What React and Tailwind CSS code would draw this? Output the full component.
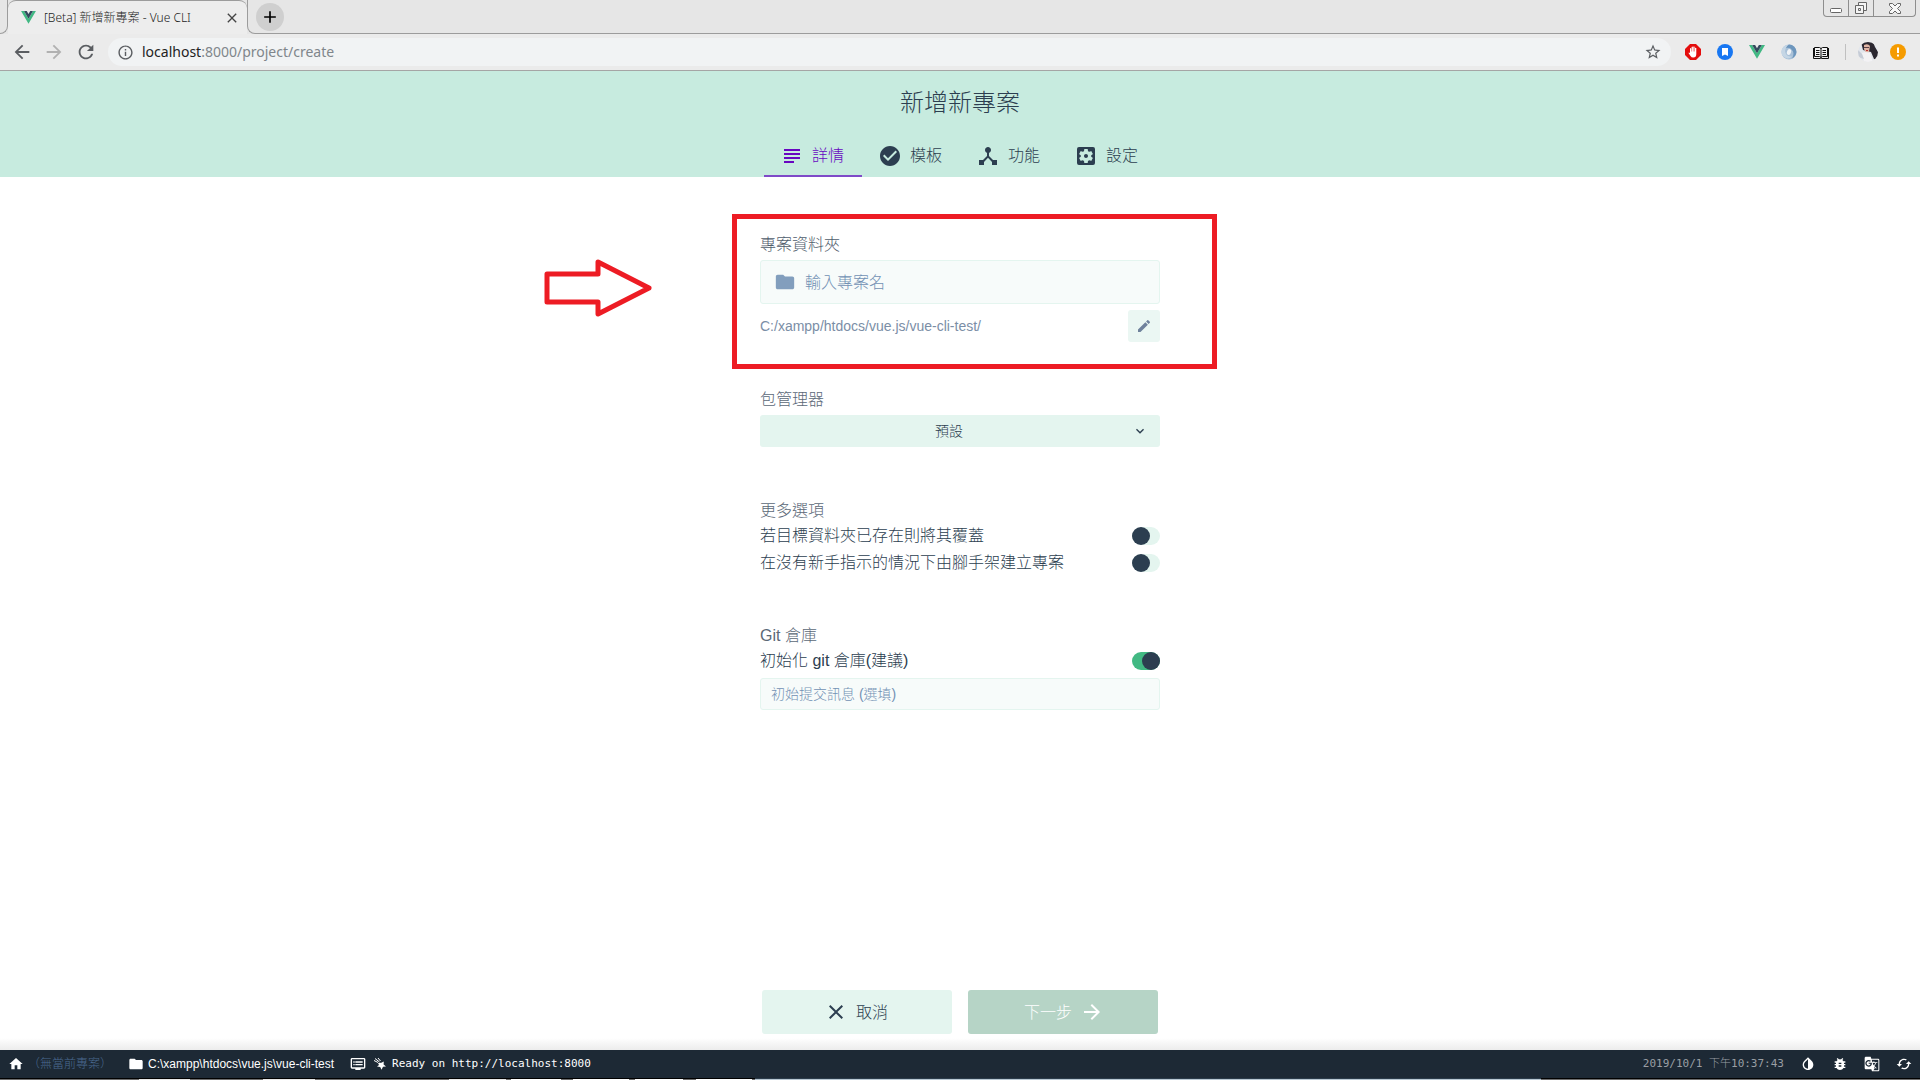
import React, { useState } from "react";
import {
  MdSubject, MdCheckCircle, MdDeviceHub, MdSettingsApplications, MdFolder, MdEdit,
  MdKeyboardArrowDown, MdClose, MdArrowForward, MdArrowBack, MdHome, MdDvr,
  MdInvertColors, MdBugReport, MdGTranslate, MdCached, MdRefresh, MdInfoOutline,
  MdStarBorder, MdAdd,
} from "react-icons/md";

function VueLogo({ className }) {
  return (
    <svg viewBox="0 0 16 14" className={className} aria-hidden="true">
      <path d="M0 0h3.2L8 8.3 12.800 0H16L8 13.800z" fill="#41b883" />
      <path d="M3.200 0H6.100L8 3.300 9.900 0h2.900L8 8.300z" fill="#35495e" />
    </svg>
  );
}

function WindowControls() {
  return (
    <div className="mr-1 flex h-[17px] w-[93px] self-start rounded-b border border-t-0 border-[#8e8e8e]">
      <button aria-label="最小化" className="flex w-[25px] items-end justify-center border-r border-[#8e8e8e] pb-[3px]">
        <svg viewBox="0 0 12 5" className="h-[5px] w-3"><rect x="0.5" y="0.5" width="11" height="4" rx="1" fill="#fff" stroke="#666" /></svg>
      </button>
      <button aria-label="還原" className="flex w-[25px] items-center justify-center border-r border-[#8e8e8e]">
        <svg viewBox="0 0 14 14" className="h-[14px] w-[14px]" fill="#f4f4f4" stroke="#666">
          <path d="M4.500 1.500h8v8h-8z" />
          <path d="M1.500 4.500h8v8h-8z" />
          <path d="M4.500 7.500h2v2h-2z" />
        </svg>
      </button>
      <button aria-label="關閉視窗" className="flex flex-1 items-center justify-center">
        <svg viewBox="0 0 12 11" className="h-[11px] w-3" fill="#f8f8f8" stroke="#666">
          <path d="M.5.500h3L6 3 8.500.500h3v2L8.500 5.500l3 3v2h-3L6 8l-2.500 2.500h-3v-2l3-3-3-3z" />
        </svg>
      </button>
    </div>
  );
}

function TabStrip() {
  return (
    <div className="flex h-[34px] bg-[#e6e6e6]">
      <div className="w-2 rounded-br-lg border-r border-b border-[#9c9c9c]" />
      <div className="flex w-[239px] items-center rounded-t-lg border-t border-[#9c9c9c] bg-[#ededed] pr-[7px] pl-[13px]">
        <VueLogo className="h-[13px] w-[15px]" />
        <span className="ml-2 flex-1 whitespace-nowrap font-['Noto_Sans','Noto_Sans_CJK_TC',sans-serif] text-xs text-[#222]">[Beta] 新增新專案 - Vue CLI</span>
        <button aria-label="關閉分頁"><MdClose className="size-4 text-[#444]" /></button>
      </div>
      <div className="flex flex-1 rounded-bl-lg border-b border-l border-[#9c9c9c]">
        <button aria-label="新增分頁" className="mt-[3px] ml-2 flex size-7 items-center justify-center rounded-full bg-[#cfcfcf]">
          <MdAdd className="size-5 text-black" />
        </button>
        <div className="flex-1" />
        <WindowControls />
      </div>
    </div>
  );
}

function AddressBar() {
  return (
    <div className="flex h-[37px] items-center border-b border-[#a5a5a5] bg-[#ebebeb] text-[#5a5d61]">
      <button aria-label="上一頁" className="ml-[11px]"><MdArrowBack className="size-[22px]" /></button>
      <button aria-label="下一頁" className="ml-[10px] text-[#b1b1b1]"><MdArrowForward className="size-[22px]" /></button>
      <button aria-label="重新載入" className="ml-[10px]"><MdRefresh className="size-[22px]" /></button>
      <div className="ml-[11px] flex h-7 flex-1 items-center rounded-full bg-[#f1f3f4] pr-[9px] pl-[9px]">
        <MdInfoOutline className="size-[17px]" />
        <p className="ml-2 flex-1 font-['Noto_Sans',sans-serif] text-sm font-normal text-[#80868b]"><span className="text-[#222]">localhost</span>:8000/project/create</p>
        <button aria-label="加入書籤"><MdStarBorder className="size-[18px]" /></button>
      </div>
      <div className="flex items-center gap-4 pr-[14px] pl-[14px]">
        <svg viewBox="0 0 16 16" className="size-4"><path d="M5 0h6l5 5v6l-5 5H5l-5-5V5z" fill="#e40d0d" /><path d="M5 8V4.500q.600-.800 1.200 0V7.500h.400V3q.600-.800 1.300 0V7.500h.400V2.800q.700-.800 1.300 0V7.500h.400V4q.700-.700 1.300 0V10q0 3.500-3 3.500Q6.400 13.500 5.500 12L3.500 9q.300-1.200 1.500 0z" fill="#fff" /></svg>
        <svg viewBox="0 0 16 16" className="size-4"><circle cx="8" cy="8" r="8" fill="#1877f2" /><path d="M5 4h6v8L8 10.500 5 12z" fill="#fff" /></svg>
        <VueLogo className="h-[14px] w-4" />
        <svg viewBox="0 0 16 16" className="size-4">
          <circle cx="8" cy="8" r="7.500" fill="#a9c1d8" />
          <path d="M8 .5A7.500 7.500 0 0 1 15.500 8Q15 12 11 14.500 14 9 11 6 9 3 5 4 6 1 8 .5z" fill="#6d96bd" />
          <path d="M1 5Q3 1 7 1 3 4 4.500 9 6 13 11 12.500 7 16 3 13-1 10 1 5z" fill="#c5d6e5" />
          <ellipse cx="8" cy="8" rx="2" ry="3" transform="rotate(20 8 8)" fill="#f1f4f7" />
        </svg>
        <svg viewBox="0 0 16 13" className="h-[13px] w-4" fill="none" stroke="#111">
          <path d="M1.500 1.500h5L8 2.500l1.500-1h5v9h-5L8 11.500l-1.500-1h-5zM8 2v9.500" fill="#f4f4f4" />
          <path d="M3 4.500h3.500M3 6.500h3.500M3 8.500h3.500M9.500 4.500H13M9.500 6.500H13M9.500 8.500H13" />
          <path d="M.5 2v10.500H7l1-.5 1 .5h6.500V2" />
        </svg>
        <div className="h-4 w-px bg-[#c0c0c0]" />
        <svg viewBox="0 0 20 20" className="-ml-1 size-5">
          <clipPath id="avatar"><circle cx="10" cy="10" r="10" /></clipPath>
          <g clipPath="url(#avatar)">
            <path d="M0 0h20v20H0z" fill="#e2e6ec" />
            <path d="M3 0h12l2 5 3 5v8l-4-1-3-7-8-2z" fill="#2b2730" />
            <path d="M6 3q4-2 6 1l-1 6-3 1-2-4z" fill="#dfb5a5" />
            <path d="M6 5.500h5" stroke="#5a4046" />
            <path d="M4 11l4-1 4 1 3 9H6z" fill="#f3f2f4" />
            <path d="M0 8l4 4 2 5-6-2z" fill="#c6ccd6" />
            <path d="M8 8.500h2" stroke="#b33" />
          </g>
        </svg>
        <svg viewBox="0 0 16 16" className="-ml-1 size-4"><circle cx="8" cy="8" r="8" fill="#f59b00" /><path d="M7 3.500h2v5.500H7zM7 10.500h2v2H7z" fill="#fff" /></svg>
      </div>
    </div>
  );
}

const steps = [
  { label: "詳情", Icon: MdSubject },
  { label: "模板", Icon: MdCheckCircle },
  { label: "功能", Icon: MdDeviceHub },
  { label: "設定", Icon: MdSettingsApplications },
];

function Header() {
  const [active, setActive] = useState(0);
  return (
    <header className="flex flex-col items-center bg-[#c7ebdf]">
      <h1 className="h-16 text-2xl leading-16">新增新專案</h1>
      <nav className="flex">
        {steps.map(({ label, Icon }, i) => (
          <button
            key={label}
            onClick={() => setActive(i)}
            className={
              i === active
                ? "flex h-[42px] w-[98px] items-center justify-center gap-2 border-b-2 border-[#7f4bc8] pt-0.5 pr-0.5 text-[#6806c1]"
                : "flex h-[42px] w-[98px] items-center justify-center gap-2 border-b-2 border-transparent pt-0.5 pr-0.5"
            }
          >
            <Icon className="size-6" />
            <span>{label}</span>
          </button>
        ))}
      </nav>
    </header>
  );
}

function Switch({ label, defaultChecked }) {
  return (
    <label className="flex h-[27px] items-center justify-between">
      <span>{label}</span>
      <input
        type="checkbox"
        role="switch"
        defaultChecked={defaultChecked}
        className="h-[18px] w-7 appearance-none rounded-full bg-[#e4f5ef] before:block before:size-[18px] before:rounded-full before:bg-[#2c3e50] checked:bg-[#42b983] checked:before:ml-[10px]"
      />
    </label>
  );
}

/* Red frame and arrow that point the reader to the folder field. */
function Callout() {
  return (
    <div className="pointer-events-none absolute -top-[18px] -right-[57px] -bottom-[27px] -left-7 border-5 border-[#ed1c24]">
      <svg viewBox="0 0 108 60" className="absolute top-[38px] -left-[193px] h-[60px] w-[108px]" fill="none" stroke="#ed1c24" strokeWidth="5" strokeLinejoin="round">
        <path d="M3 17h51V5l51 26-51 26V45H3z" />
      </svg>
    </div>
  );
}

function Details() {
  return (
    <main className="mx-auto w-full max-w-[400px] flex-1 pt-[55px]">
      <section className="relative">
        <Callout />
        <label htmlFor="folder" className="block h-6 leading-[26px] text-[#4f5d6c]">專案資料夾</label>
        <div className="mt-1 flex h-11 items-center gap-[9px] rounded-[3px] border border-[#e4f5ef] bg-[#f7fbfa] px-[13px] text-[#829ebd]">
          <MdFolder className="size-[22px]" />
          <input id="folder" placeholder="輸入專案名" className="h-full min-w-0 flex-1 pt-0.5 outline-none placeholder:text-[#7291b4]" />
        </div>
        <div className="mt-[6px] flex h-8 items-center justify-between text-sm text-[#7b8ea6]">
          <span>C:/xampp/htdocs/vue.js/vue-cli-test/</span>
          <button aria-label="編輯路徑" className="flex size-8 items-center justify-center rounded-[3px] bg-[#ebf7f3] text-[#6f829c]"><MdEdit className="size-4" /></button>
        </div>
      </section>

      <section className="mt-[45px]">
        <label htmlFor="manager" className="block h-6 leading-[26px] text-[#5b6877]">包管理器</label>
        <div className="relative mt-1">
          <select id="manager" className="h-8 w-full appearance-none rounded-[3px] bg-[#e4f5ef] pr-[22px] text-center text-sm [text-align-last:center]">
            <option>預設</option>
          </select>
          <MdKeyboardArrowDown className="pointer-events-none absolute top-2 right-3 size-4" />
        </div>
      </section>

      <section className="mt-[51px]">
        <h2 className="h-6 leading-[26px] text-[#5b6877]">更多選項</h2>
        <Switch label="若目標資料夾已存在則將其覆蓋" />
        <Switch label="在沒有新手指示的情況下由腳手架建立專案" />
      </section>

      <section className="mt-[47px]">
        <h2 className="h-6 leading-[26px] text-[#5b6877]">Git 倉庫</h2>
        <Switch label="初始化 git 倉庫(建議)" defaultChecked />
        <input aria-label="初始提交訊息" placeholder="初始提交訊息 (選填)" className="mt-1 h-8 w-full rounded-[3px] border border-[#e4f5ef] bg-[#f7fbfa] px-[10px] text-sm outline-none placeholder:text-[#7291b4]" />
      </section>
    </main>
  );
}

function Actions() {
  return (
    <div className="flex justify-center gap-4 bg-linear-to-b from-white from-80% to-[#ececec] pb-4">
      <button className="flex h-11 w-[190px] items-center justify-center gap-2 rounded-[3px] bg-[#e4f5ef] pr-0.5">
        <MdClose className="size-6" />
        <span className="pt-0.5">取消</span>
      </button>
      <button disabled className="flex h-11 w-[190px] items-center justify-center gap-2 rounded-[3px] bg-[#b6d4c6] pl-0.5 text-white">
        <span className="pt-0.5">下一步</span>
        <MdArrowForward className="size-6" />
      </button>
    </div>
  );
}

function StatusBar() {
  return (
    <footer className="flex h-7 items-center bg-[#1d2935] text-xs text-white">
      <MdHome className="ml-2 size-4" />
      <span className="ml-1 text-[#4a6a90]">（無當前專案）</span>
      <MdFolder className="ml-4 size-4" />
      <span className="ml-1">C:\xampp\htdocs\vue.js\vue-cli-test</span>
      <MdDvr className="ml-4 size-4" />
      <svg viewBox="0 0 12 12" className="ml-2 size-3" fill="#fff">
        <path d="M4 5l3.300-.2L9.800 3.500 9.600 6.400 12 8.500l-3 .3L7.500 11.700 6.200 8.900 3 8.500l2-1.500z" />
        <path d="M0 2.500l4 2M1 .5l4.500 3.500M4 0l2.500 3" stroke="#fff" />
      </svg>
      <span className="ml-[6px] font-['DejaVu_Sans_Mono',monospace] text-[11px]">Ready on http://localhost:8000</span>
      <span className="ml-auto font-['DejaVu_Sans_Mono','Noto_Sans_CJK_TC',monospace] text-[11px] text-[#9a9fa4]">2019/10/1 下午10:37:43</span>
      <div className="flex gap-4 pr-2 pl-4">
        <button aria-label="切換色彩"><MdInvertColors className="size-4" /></button>
        <button aria-label="回報錯誤"><MdBugReport className="size-4" /></button>
        <button aria-label="翻譯"><MdGTranslate className="size-4" /></button>
        <button aria-label="重新整理"><MdCached className="size-4" /></button>
      </div>
    </footer>
  );
}

/* Upper edge of the desktop taskbar. */
function TaskbarEdge() {
  return (
    <div className="flex h-0.5">
      <div className="flex w-[755px] border-t border-black bg-[#6e6e6e]">
        <div className="ml-[139px] w-[51px] bg-[#e8e8e8]" />
        <div className="ml-[73px] w-[52px] bg-[#e8e8e8]" />
        <div className="ml-[134px] w-[57px] bg-[#e8e8e8]" />
        <div className="ml-[5px] w-[50px] bg-white" />
        <div className="ml-3 w-14 bg-white" />
        <div className="ml-[6px] w-12 bg-white" />
        <div className="ml-[13px] w-14 bg-white" />
      </div>
      <div className="w-[786px] border-t border-[#2b3b4a] bg-[#b9c8d3]" />
      <div className="flex-1 border-t border-black bg-[#6e6e6e]" />
    </div>
  );
}

export default function App() {
  return (
    <div className="flex min-h-screen flex-col bg-white font-['Liberation_Sans','Noto_Sans_CJK_TC',sans-serif] text-base font-light text-[#2c3e50]">
      <TabStrip />
      <AddressBar />
      <Header />
      <Details />
      <Actions />
      <StatusBar />
      <TaskbarEdge />
    </div>
  );
}
